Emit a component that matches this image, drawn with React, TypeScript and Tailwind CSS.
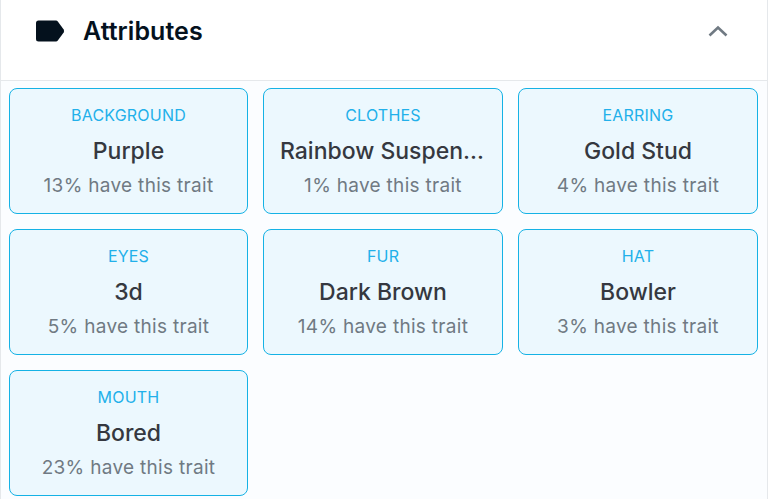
const traits = [
  { label: "BACKGROUND", value: "Purple", rarity: "13% have this trait" },
  { label: "CLOTHES", value: "Rainbow Suspenders", rarity: "1% have this trait" },
  { label: "EARRING", value: "Gold Stud", rarity: "4% have this trait" },
  { label: "EYES", value: "3d", rarity: "5% have this trait" },
  { label: "FUR", value: "Dark Brown", rarity: "14% have this trait" },
  { label: "HAT", value: "Bowler", rarity: "3% have this trait" },
  { label: "MOUTH", value: "Bored", rarity: "23% have this trait" },
]

export default function App() {
  return (
    <div className="w-[768px] h-[499px] overflow-hidden border-x border-[#e5e8eb] bg-white font-['Inter',sans-serif]">
      {/* Header */}
      <div className="h-[81px] flex items-center justify-between pl-[34px] pr-[39px] pb-[18px] border-b border-[#e5e8eb]">
        <div className="flex items-center gap-[18px]">
          <svg width="30" height="22" viewBox="0 0 29 22" fill="#04111d">
            <path d="M3 0.5H20.5Q21.6 0.5 22.3 1.4L28.2 9.6Q29 11 28.2 12.4L22.3 20.6Q21.6 21.5 20.5 21.5H3Q0.5 21.5 0.5 19V3Q0.5 0.5 3 0.5Z" />
          </svg>
          <span className="text-[25px] leading-none font-semibold tracking-[0.05px] text-[#04111d]">Attributes</span>
        </div>
        <svg width="20" height="12" viewBox="0 0 20 12" fill="none" stroke="#707a83" strokeWidth="2.6">
          <path d="M1.5 10.5L10 2.5L18.5 10.5" />
        </svg>
      </div>

      {/* Traits */}
      <div className="grid grid-cols-[239px_240px_240px] content-start gap-[15px] pl-2 pt-[7px] bg-[#fbfdff] h-full">
        {traits.map((t) => (
          <div
            key={t.label}
            className="h-[126px] min-w-0 flex flex-col items-center rounded-lg border border-[#15b2e5] bg-[#ecf8fe] px-4 pt-[16px]"
          >
            <div className="text-[16px] leading-[20px] tracking-[0.2px] text-[#22b0ea]">{t.label}</div>
            <div className="w-full mt-[13px] text-center truncate text-[23px] leading-[26px] font-medium text-[#353840]">
              {t.value}
            </div>
            <div className="mt-[10px] text-[19px] leading-[24px] tracking-[0.3px] text-[#707a83]">{t.rarity}</div>
          </div>
        ))}
      </div>
    </div>
  )
}
